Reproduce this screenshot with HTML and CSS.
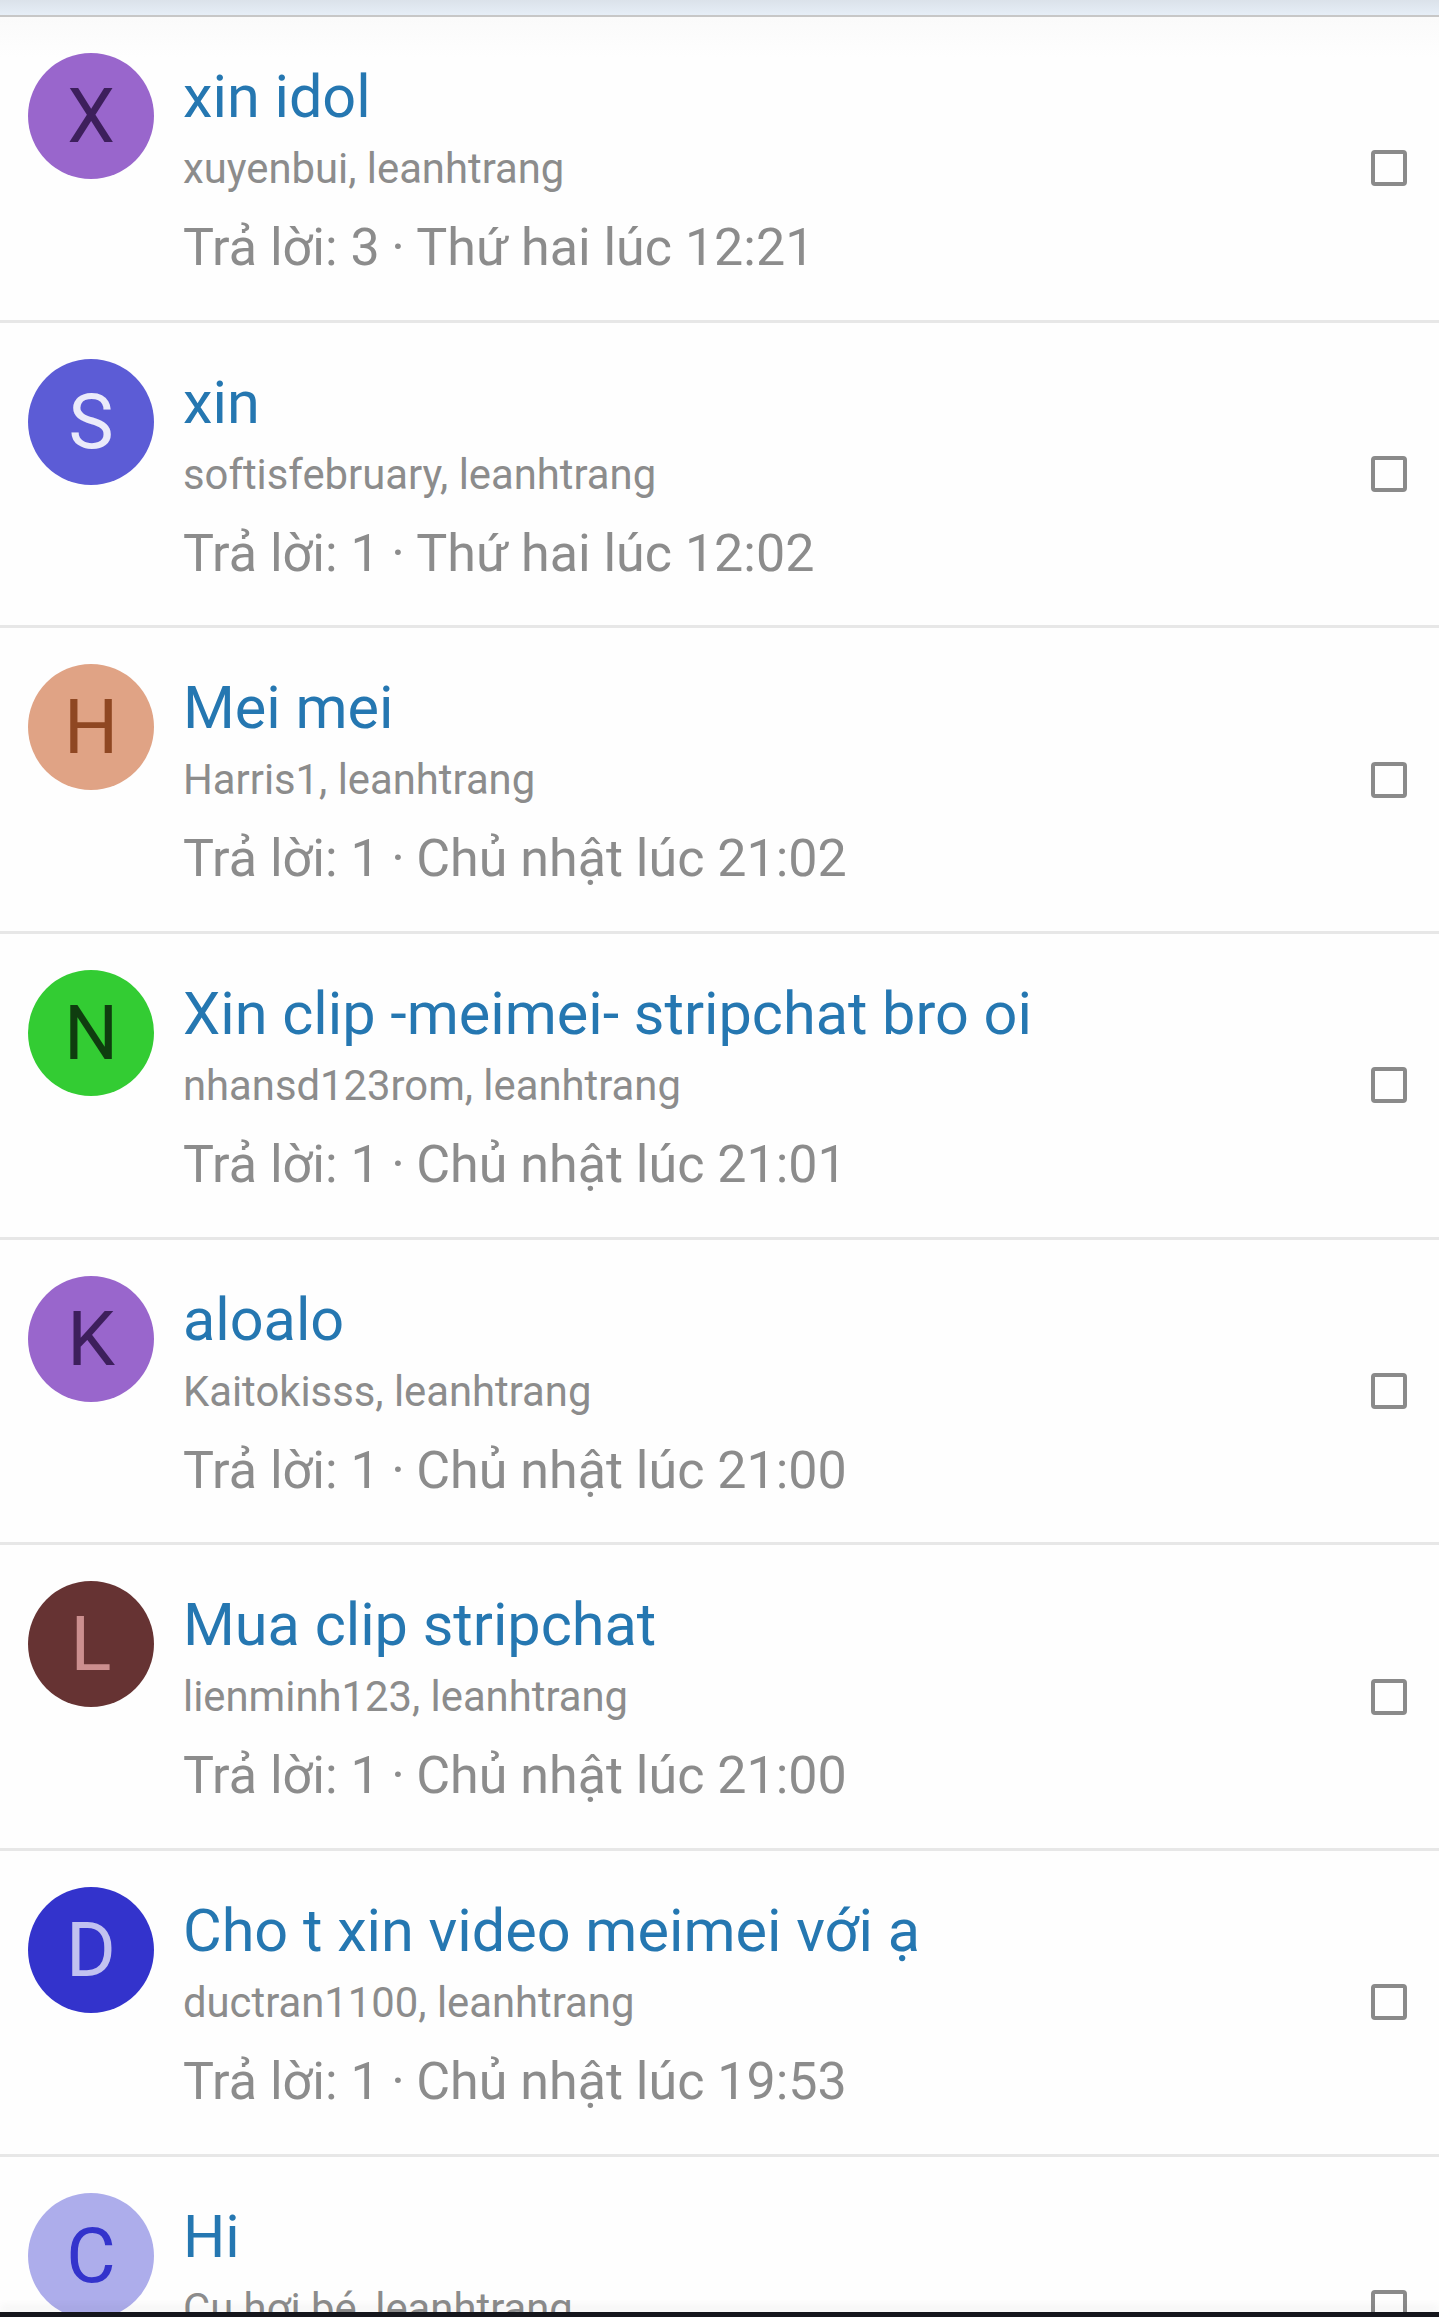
FILE: index.html
```html
<!DOCTYPE html>
<html lang="vi">
<head>
    <meta charset="UTF-8">
    <meta name="viewport" content="width=device-width, initial-scale=1.0">
    <title>Hộp thư</title>
    <link rel="stylesheet" href="styles.css">
</head>
<body>
    <div class="page">
        <div class="top-bar"></div>
        <ul class="thread-list">
            <li class="thread">
                <span class="avatar av-x">X</span>
                <div class="thread-main">
                    <a class="thread-title" href="#">xin idol</a>
                    <div class="thread-users">xuyenbui, leanhtrang</div>
                    <div class="thread-meta">Trả lời: 3<span class="sep">·</span>Thứ hai lúc 12:21</div>
                </div>
                <span class="check"></span>
            </li>
            <li class="thread">
                <span class="avatar av-s">S</span>
                <div class="thread-main">
                    <a class="thread-title" href="#">xin</a>
                    <div class="thread-users">softisfebruary, leanhtrang</div>
                    <div class="thread-meta">Trả lời: 1<span class="sep">·</span>Thứ hai lúc 12:02</div>
                </div>
                <span class="check"></span>
            </li>
            <li class="thread">
                <span class="avatar av-h">H</span>
                <div class="thread-main">
                    <a class="thread-title" href="#">Mei mei</a>
                    <div class="thread-users">Harris1, leanhtrang</div>
                    <div class="thread-meta">Trả lời: 1<span class="sep">·</span>Chủ nhật lúc 21:02</div>
                </div>
                <span class="check"></span>
            </li>
            <li class="thread">
                <span class="avatar av-n">N</span>
                <div class="thread-main">
                    <a class="thread-title" href="#">Xin clip -meimei- stripchat bro oi</a>
                    <div class="thread-users">nhansd123rom, leanhtrang</div>
                    <div class="thread-meta">Trả lời: 1<span class="sep">·</span>Chủ nhật lúc 21:01</div>
                </div>
                <span class="check"></span>
            </li>
            <li class="thread">
                <span class="avatar av-k">K</span>
                <div class="thread-main">
                    <a class="thread-title" href="#">aloalo</a>
                    <div class="thread-users">Kaitokisss, leanhtrang</div>
                    <div class="thread-meta">Trả lời: 1<span class="sep">·</span>Chủ nhật lúc 21:00</div>
                </div>
                <span class="check"></span>
            </li>
            <li class="thread">
                <span class="avatar av-l">L</span>
                <div class="thread-main">
                    <a class="thread-title" href="#">Mua clip stripchat</a>
                    <div class="thread-users">lienminh123, leanhtrang</div>
                    <div class="thread-meta">Trả lời: 1<span class="sep">·</span>Chủ nhật lúc 21:00</div>
                </div>
                <span class="check"></span>
            </li>
            <li class="thread">
                <span class="avatar av-d">D</span>
                <div class="thread-main">
                    <a class="thread-title" href="#">Cho t xin video meimei với ạ</a>
                    <div class="thread-users">ductran1100, leanhtrang</div>
                    <div class="thread-meta">Trả lời: 1<span class="sep">·</span>Chủ nhật lúc 19:53</div>
                </div>
                <span class="check"></span>
            </li>
            <li class="thread">
                <span class="avatar av-c">C</span>
                <div class="thread-main">
                    <a class="thread-title" href="#">Hi</a>
                    <div class="thread-users">Cu hơi bé, leanhtrang</div>
                    <div class="thread-meta">Trả lời: 1<span class="sep">·</span>Chủ nhật lúc 19:40</div>
                </div>
                <span class="check"></span>
            </li>
        </ul>
        <!-- bottom edge of the phone nav bar -->
        <div class="nav-edge"></div>
    </div>
</body>
</html>
```
FILE: styles.css
```css
body {
    margin: 0;
    font-family: Roboto, "Noto Sans", Arial, sans-serif;
    background-color: #fefefe;
}
.page {
    height: 100vh;
    overflow: hidden;
}
.top-bar {
    height: 15px;
    background: linear-gradient(#dbe2ea, #e6eef7);
    border-bottom: 2px solid #c7c7c7;
}
.thread-list {
    list-style: none;
    margin: 0;
    padding: 0;
}
.thread {
    display: flex;
    align-items: flex-start;
    height: 302.7px;
    padding: 0 32px 0 28px;
    border-bottom: 3px solid #e7e7e7;
    background-color: #fefefe;
}
.thread:first-child {
    background: linear-gradient(#fafafa, #fefefe 40px);
}
.avatar {
    flex: none;
    width: 126px;
    height: 126px;
    margin-top: 36px;
    border-radius: 50%;
    display: flex;
    align-items: center;
    justify-content: center;
    font-size: 76px;
    line-height: 1;
}
.av-x, .av-k {
    background-color: #9966cc;
    color: #3d1f5c;
}
.av-s {
    background-color: #5c5cd6;
    color: #ebebfa;
}
.av-h {
    background-color: #e0a385;
    color: #8f4722;
}
.av-n {
    background-color: #33cc33;
    color: #0f3d0f;
}
.av-l {
    background-color: #663333;
    color: #cc8f8f;
}
.av-d {
    background-color: #3333cc;
    color: #c2c2f0;
}
.av-c {
    background-color: #adadeb;
    color: #3333cc;
}
.thread-main {
    flex: 1;
    min-width: 0;
    margin-left: 29px;
    padding-top: 44px;
}
.thread-title {
    display: block;
    font-size: 59.4px;
    line-height: 72px;
    color: #2577b1;
    text-decoration: none;
    white-space: nowrap;
}
.thread-users {
    margin-top: 8px;
    font-size: 41.8px;
    line-height: 56px;
    color: #8c8c8c;
}
.thread-meta {
    margin-top: 17px;
    font-size: 52px;
    line-height: 68px;
    color: #8c8c8c;
}
.sep {
    margin: 0 11.5px;
}
.check {
    flex: none;
    align-self: center;
    width: 28px;
    height: 28px;
    border: 4px solid #8a8a8a;
    border-radius: 4px;
}
.nav-edge {
    position: fixed;
    left: 0;
    right: 0;
    bottom: 0;
    height: 5px;
    background-color: #15161c;
    box-shadow: 0 -6px 8px rgba(0, 0, 0, 0.06);
}
```
